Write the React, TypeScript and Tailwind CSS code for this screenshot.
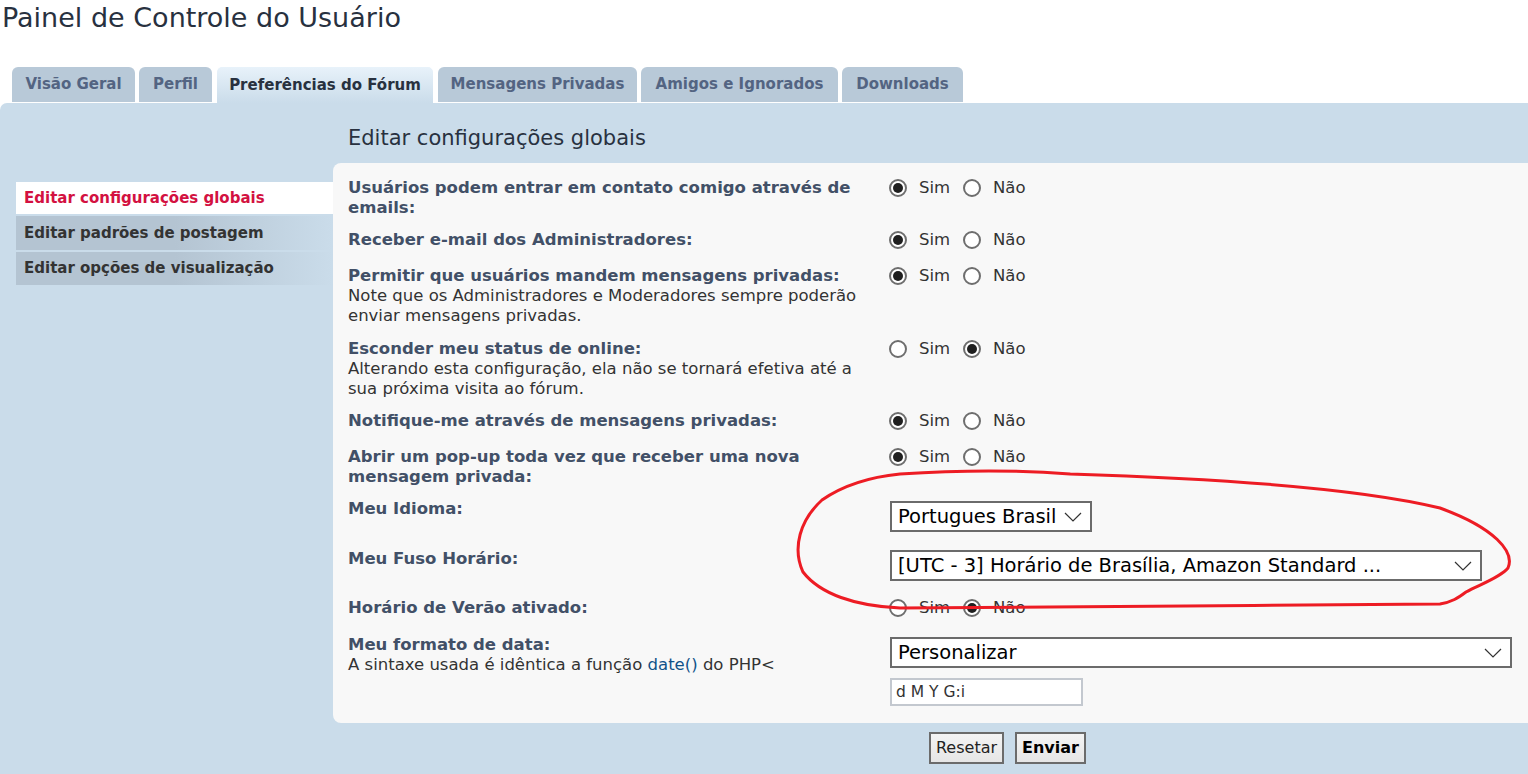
import React from 'react';

const tabs = [
  { label: 'Visão Geral', w: 'w-[123px]' },
  { label: 'Perfil', w: 'w-[73px]' },
  { label: 'Preferências do Fórum', w: 'w-[218px]', active: true },
  { label: 'Mensagens Privadas', w: 'w-[199px]' },
  { label: 'Amigos e Ignorados', w: 'w-[197px]' },
  { label: 'Downloads', w: 'w-[121px]' },
];

function Radio({ checked }: { checked?: boolean }) {
  return (
    <span className="flex h-[18px] w-[18px] shrink-0 items-center justify-center rounded-full border-2 border-[#6e6e6e] bg-white">
      {checked && <span className="h-[10px] w-[10px] rounded-full bg-[#1f1f1f]" />}
    </span>
  );
}

function YesNo({ yes }: { yes: boolean }) {
  return (
    <div className="-ml-px flex h-[20px] items-center text-[16.5px] text-[#333]">
      <Radio checked={yes} />
      <span className="ml-[12px] w-[44px]">Sim</span>
      <Radio checked={!yes} />
      <span className="ml-[12px]">Não</span>
    </div>
  );
}

function Chevron() {
  return (
    <svg width="18" height="10" viewBox="0 0 18 10" fill="none" stroke="#333" strokeWidth="1.2">
      <path d="M1 1l8 8 8-8" />
    </svg>
  );
}

function Select({ value, w }: { value: string; w: string }) {
  return (
    <div className={`flex h-[31px] items-center justify-between border-2 border-[#6b6b6b] bg-white pl-[6px] pr-[8px] text-[19.5px] text-black ${w}`}>
      <span className="whitespace-nowrap">{value}</span>
      <Chevron />
    </div>
  );
}

type Row = {
  label: string;
  desc?: React.ReactNode;
  yes: boolean;
  mb: string;
};

const rows: Row[] = [
  { label: 'Usuários podem entrar em contato comigo através de emails:', yes: true, mb: 'mb-[12px]' },
  { label: 'Receber e-mail dos Administradores:', yes: true, mb: 'mb-[16px]' },
  {
    label: 'Permitir que usuários mandem mensagens privadas:',
    desc: 'Note que os Administradores e Moderadores sempre poderão enviar mensagens privadas.',
    yes: true,
    mb: 'mb-[13px]',
  },
  {
    label: 'Esconder meu status de online:',
    desc: 'Alterando esta configuração, ela não se tornará efetiva até a sua próxima visita ao fórum.',
    yes: false,
    mb: 'mb-[12px]',
  },
  { label: 'Notifique-me através de mensagens privadas:', yes: true, mb: 'mb-[16px]' },
  { label: 'Abrir um pop-up toda vez que receber uma nova mensagem privada:', yes: true, mb: 'mb-[12px]' },
];

export default function App() {
  return (
    <div className="relative min-h-screen overflow-hidden bg-white font-['DejaVu_Sans',Verdana,sans-serif]">
      <h1 className="h-[36px] pl-[2px] text-[27px] leading-[36px] text-[#28313f]">Painel de Controle do Usuário</h1>

      <div className="mt-[30px] flex items-end gap-[4px] pl-[12px]">
        {tabs.map((t) =>
          t.active ? (
            <div
              key={t.label}
              className={`${t.w} flex h-[37px] items-center justify-center rounded-t-[6px] border border-b-0 border-white bg-gradient-to-b from-[#e8f2fa] to-[#cadcea] text-[15px] font-bold text-[#28313f]`}
            >
              {t.label}
            </div>
          ) : (
            <div
              key={t.label}
              className={`${t.w} mb-px flex h-[35px] items-center justify-center rounded-t-[6px] bg-[#b8c9d8] text-[15px] font-bold text-[#536482]`}
            >
              {t.label}
            </div>
          )
        )}
      </div>

      <div className="flex min-h-[672px] rounded-tl-[7px] bg-[#cadcea]">
        <div className="w-[333px] shrink-0 pl-[16px] pt-[79px]">
          <div className="flex h-[32px] items-center bg-white pl-[8px] text-[15px] font-bold text-[#d31141]">
            Editar configurações globais
          </div>
          <div className="mt-[2px] flex h-[34px] items-center bg-gradient-to-r from-[#b4c4d2] via-[#b4c4d2] to-[#cadcea] pl-[8px] text-[15px] font-bold text-[#333]">
            Editar padrões de postagem
          </div>
          <div className="mt-[2px] flex h-[33px] items-center bg-gradient-to-r from-[#b4c4d2] via-[#b4c4d2] to-[#cadcea] pl-[8px] text-[15px] font-bold text-[#333]">
            Editar opções de visualização
          </div>
        </div>

        <div className="flex-1">
          <h2 className="h-[60px] pl-[15px] pt-[21px] text-[21px] leading-[28px] text-[#28313f]">
            Editar configurações globais
          </h2>

          <div className="h-[560px] rounded-l-[8px] bg-[#f8f8f8] pl-[15px] pt-[15px] text-[16.5px] leading-[20px] text-[#425067]">
            {rows.map((r) => (
              <div key={r.label} className={`flex ${r.mb}`}>
                <div className="w-[542px] shrink-0 pr-[20px]">
                  <div className="font-bold">{r.label}</div>
                  {r.desc && <div className="text-[#333]">{r.desc}</div>}
                </div>
                <YesNo yes={r.yes} />
              </div>
            ))}

            <div className="mb-[17px] flex">
              <div className="w-[542px] shrink-0 font-bold">Meu Idioma:</div>
              <div className="mt-[2px]">
                <Select value="Portugues Brasil" w="w-[202px]" />
              </div>
            </div>

            <div className="mb-[17px] flex">
              <div className="w-[542px] shrink-0 font-bold">Meu Fuso Horário:</div>
              <div className="mt-[1px]">
                <Select value="[UTC - 3] Horário de Brasília, Amazon Standard ..." w="w-[592px]" />
              </div>
            </div>

            <div className="mb-[17px] flex">
              <div className="w-[542px] shrink-0 font-bold">Horário de Verão ativado:</div>
              <YesNo yes={false} />
            </div>

            <div className="flex">
              <div className="w-[542px] shrink-0">
                <div className="font-bold">Meu formato de data:</div>
                <div className="text-[#333]">
                  A sintaxe usada é idêntica a função <span className="text-[#105289]">date()</span> do PHP&lt;
                </div>
              </div>
              <div className="mt-[2px]">
                <Select value="Personalizar" w="w-[622px]" />
                <div className="mt-[10px] flex h-[28px] w-[193px] items-center border-2 border-[#c3c8cf] bg-white pl-[4px] text-[15.5px] text-[#333]">
                  d M Y G:i
                </div>
              </div>
            </div>
          </div>

          <div className="mt-[9px] flex gap-[11px] pl-[596px] text-[16px]">
            <button className="h-[32px] w-[75px] border-2 border-[#6b6b6b] bg-gradient-to-b from-[#f4f4f4] to-[#e6e6e6] text-[#222]">Resetar</button>
            <button className="h-[32px] w-[71px] border-2 border-[#6b6b6b] bg-gradient-to-b from-[#f4f4f4] to-[#e6e6e6] font-bold text-black">Enviar</button>
          </div>
        </div>
      </div>

      <svg className="pointer-events-none absolute left-0 top-0" width="1528" height="774" fill="none">
        <path
          d="M1070 474 C1200 478 1350 486 1440 508 C1495 528 1515 552 1508 568 C1500 578 1478 585 1466 592 C1458 598 1452 602 1440 604 C1260 606 1050 606 900 608 C855 606 820 594 803 572 C792 548 800 520 822 500 C845 484 870 477 900 474 C960 470 1020 470 1070 474"
          stroke="#ed1c24"
          strokeWidth="3"
          strokeLinecap="round"
        />
      </svg>
    </div>
  );
}
